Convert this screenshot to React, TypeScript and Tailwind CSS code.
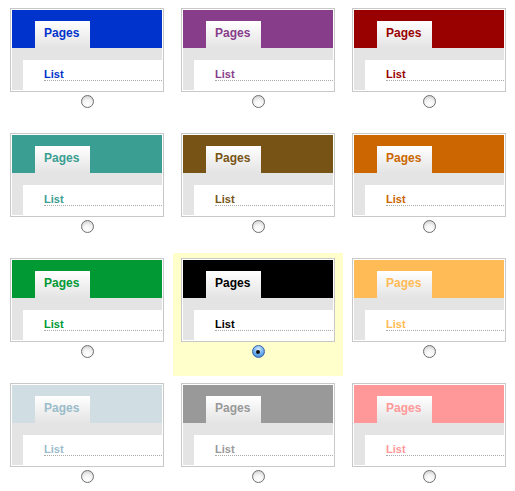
import React from "react";

type Theme = {
  band: string;
  text: string;
};

const themes: Theme[] = [
  { band: "bg-[#0033cc]", text: "text-[#0033cc]" },
  { band: "bg-[#883d8a]", text: "text-[#883d8a]" },
  { band: "bg-[#990000]", text: "text-[#990000]" },
  { band: "bg-[#3a9e92]", text: "text-[#3a9e92]" },
  { band: "bg-[#775416]", text: "text-[#775416]" },
  { band: "bg-[#cc6600]", text: "text-[#cc6600]" },
  { band: "bg-[#009933]", text: "text-[#009933]" },
  { band: "bg-[#000000]", text: "text-[#000000]" },
  { band: "bg-[#ffbb55]", text: "text-[#ffbb55]" },
  { band: "bg-[#d0dde2]", text: "text-[#9bbccb]" },
  { band: "bg-[#999999]", text: "text-[#999999]" },
  { band: "bg-[#ff9999]", text: "text-[#ff9999]" },
];

const SELECTED = 7;

const Radio = ({ checked }: { checked: boolean }) =>
  checked ? (
    <span className="flex h-[13px] w-[13px] items-center justify-center rounded-full border border-[#3b64a8] bg-[radial-gradient(circle_at_50%_30%,#d8ecff_0%,#7ab6f2_45%,#2a78d6_100%)]">
      <span className="h-[4px] w-[4px] rounded-full bg-[#111]" />
    </span>
  ) : (
    <span className="h-[13px] w-[13px] rounded-full border border-[#6f6f6f] bg-[radial-gradient(circle_at_50%_75%,#ffffff_0%,#f4f4f4_45%,#c4c4c4_100%)]" />
  );

const ThemeCard = ({ theme }: { theme: Theme }) => (
  <div className="w-[154px] h-[84px] border border-[#c8c8c8] bg-white p-px">
    <div className={`h-[38px] flex items-end pl-[23px] ${theme.band}`}>
      <div
        className={`w-[55px] h-[27px] pl-[9px] pt-[5px] text-[12px] leading-[14px] font-bold bg-gradient-to-b from-white to-[#e4e4e4] ${theme.text}`}
      >
        Pages
      </div>
    </div>
    <div className="h-[12px] bg-[#e4e4e4]" />
    <div className="flex h-[30px]">
      <div className="w-[11px] bg-[#e4e4e4]" />
      <div className="flex-1 pl-[21px] pt-[8px]">
        <div
          className={`h-[13px] text-[11px] leading-[12px] font-bold border-b border-dotted border-[#aaaaaa] ${theme.text}`}
        >
          List
        </div>
      </div>
    </div>
  </div>
);

export default function App() {
  return (
    <div
      className="min-h-[491px] bg-white pl-[2px] pt-[3px]"
      style={{ fontFamily: '"Liberation Sans", Arial, sans-serif' }}
    >
      <div className="grid grid-cols-[170px_170px_170px] gap-x-px gap-y-[2px]">
        {themes.map((theme, i) => (
          <div
            key={i}
            className={`h-[123px] pl-[8px] pt-[5px] ${i === SELECTED ? "bg-[#ffffcc]" : ""}`}
          >
            <div className="w-[154px] flex flex-col items-center gap-[3px]">
              <ThemeCard theme={theme} />
              <Radio checked={i === SELECTED} />
            </div>
          </div>
        ))}
      </div>
    </div>
  );
}
